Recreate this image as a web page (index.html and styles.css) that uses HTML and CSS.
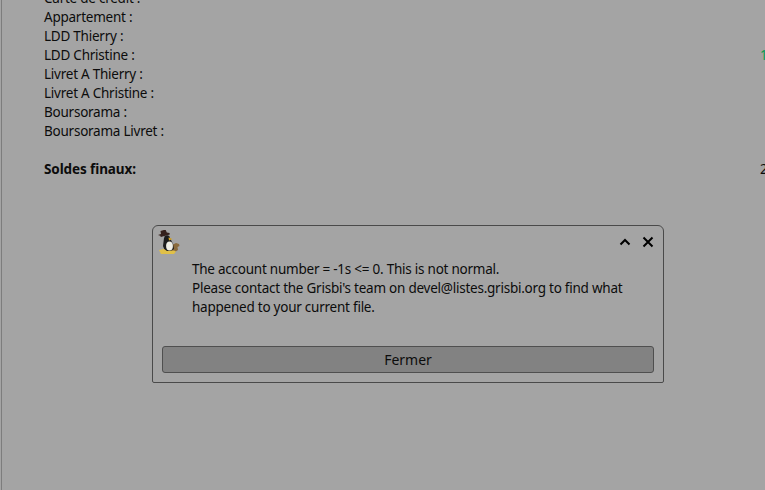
FILE: index.html
```html
<!DOCTYPE html>
<html lang="fr">
<head>
<meta charset="utf-8">
<title>Grisbi</title>
<link rel="stylesheet" href="styles.css">
</head>
<body>
<main class="page">
  <section class="accounts">
    <span>Carte de crédit :</span><span></span>
    <span>Appartement :</span><span></span>
    <span>LDD Thierry :</span><span></span>
    <span>LDD Christine :</span><span class="positive">1</span>
    <span>Livret A Thierry :</span><span></span>
    <span>Livret A Christine :</span><span></span>
    <span>Boursorama :</span><span></span>
    <span>Boursorama Livret :</span><span></span>
    <span class="blank"></span><span></span>
    <strong>Soldes finaux:</strong><span>2</span>
  </section>
</main>
<div class="dialog" role="dialog">
  <header class="titlebar">
    <svg class="logo" width="24" height="24" viewBox="0 0 24 24">
      <path d="M16 15l4-2 3 1 .5 2-2 1 .5 3-3 2-4-1z" fill="#8a6a3c"/>
      <path d="M8 8l6 0 3 6 1 5-3 2H9l-2-5z" fill="#1c1c1c"/>
      <ellipse cx="13.500" cy="16" rx="3.400" ry="4.600" fill="#f0efe6"/>
      <circle cx="11" cy="8" r="2.800" fill="#1c1c1c"/>
      <path d="M12.500 7.500l4 1.500-3.500 1.500z" fill="#d9a520"/>
      <path d="M2 5l3-1-.5-3 5-1.500 1.300 3 2.700.5.300 1.500-9 2.500-.5-1.200z" fill="#35201c"/>
      <path d="M3 20l5-1 3 2 7-.5 2 1-2 2.500H5z" fill="#e0c048"/>
    </svg>
    <div class="controls">
      <svg width="12" height="12" viewBox="0 0 12 12"><path d="M1.500 8.500 6 4l4.500 4.500" fill="none" stroke="#000" stroke-width="2"/></svg>
      <svg width="12" height="12" viewBox="0 0 12 12"><path d="M1.500 1.500l9 9M10.500 1.500l-9 9" fill="none" stroke="#000" stroke-width="2"/></svg>
    </div>
  </header>
  <p class="message">The account number = -1s &lt;= 0. This is not normal.<br>Please contact the Grisbi's team on devel@listes.grisbi.org to find what<br>happened to your current file.</p>
  <button class="close" type="button">Fermer</button>
</div>
</body>
</html>
```
FILE: styles.css
```css
* { box-sizing: border-box; }
html, body { margin: 0; height: 100%; overflow: hidden; }
body {
  background: #a4a4a4;
  color: #0c0c0c;
  font: 13.5px/19px "Noto Sans", sans-serif;
  letter-spacing: -0.24px;
}
.page {
  height: 490px;
  margin-left: 1px;
  border-left: 1px solid #7d7d7d;
  padding-left: 42px;
  overflow: hidden;
}
.accounts {
  display: grid;
  grid-template-columns: 716px 40px;
  grid-auto-rows: 19px;
  margin-top: -11px;
}
.accounts strong { font-weight: 700; letter-spacing: -0.1px; }
.positive { color: #0a9a50; }
.dialog {
  position: absolute;
  left: 152px;
  top: 225px;
  width: 512px;
  height: 158px;
  display: flex;
  flex-direction: column;
  border: 1px solid #4a4a4a;
  border-radius: 6px 6px 2px 2px;
  background: #a4a4a4;
}
.titlebar {
  display: flex;
  align-items: center;
  justify-content: space-between;
  height: 31px;
  padding: 0 9px 0 3px;
}
.controls { display: flex; gap: 11px; }
.controls svg, .logo { display: block; }
.message {
  margin: 0;
  padding: 2.500px 39px 0;
  height: 89px;
}
.close {
  margin: 0 9px;
  height: 27px;
  border: 1px solid #4f4f4f;
  border-radius: 3px;
  background: #828282;
  color: #0c0c0c;
  font: 14px/19px "Noto Sans", sans-serif;
  letter-spacing: 0;
  padding: 0;
}
```
